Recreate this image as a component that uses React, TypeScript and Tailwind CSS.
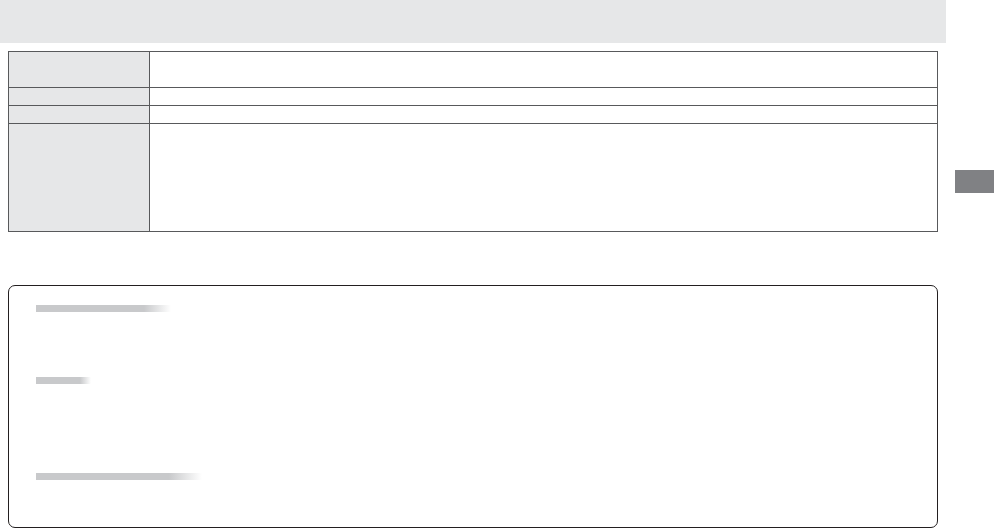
const rows = [
  { h: "h-[35px]" },
  { h: "h-[17px]" },
  { h: "h-[17px]" },
  { h: "h-[107px]" },
];

const FadeBar = ({ w }: { w: string }) => (
  <div className={`h-[7px] ${w} bg-gradient-to-r from-[#c8c9cb] from-80% to-white`} />
);

export default function App() {
  return (
    <div className="flex h-[528px] w-[994px] bg-white font-['Liberation_Sans',sans-serif]">
      <div className="flex w-[946px] flex-col">
        <div className="h-[43px] bg-[#e6e7e8]" />

        {/* spec table */}
        <div className="ml-2 mt-2 w-[930px] border border-[#58595b]">
          {rows.map((r, i) => (
            <div
              key={i}
              className={`flex ${r.h} ${i < rows.length - 1 ? "box-content border-b border-[#58595b]" : ""}`}
            >
              <div className="w-[141px] border-r border-[#58595b] bg-[#e6e7e8]" />
              <div className="flex-1" />
            </div>
          ))}
        </div>

        {/* notes box */}
        <div className="ml-2 mt-[53px] h-[243px] w-[930px] rounded-[7px] border border-[#231f20] px-[27px] pt-[19px]">
          <FadeBar w="w-[135px]" />
          <div className="h-[65px]" />
          <FadeBar w="w-[55px]" />
          <div className="h-[89px]" />
          <FadeBar w="w-[166px]" />
        </div>
      </div>

      <div className="flex flex-1 flex-col pt-[170px] pl-[9px]">
        <div className="h-[23px] w-full bg-[#808184]" />
      </div>
    </div>
  );
}
